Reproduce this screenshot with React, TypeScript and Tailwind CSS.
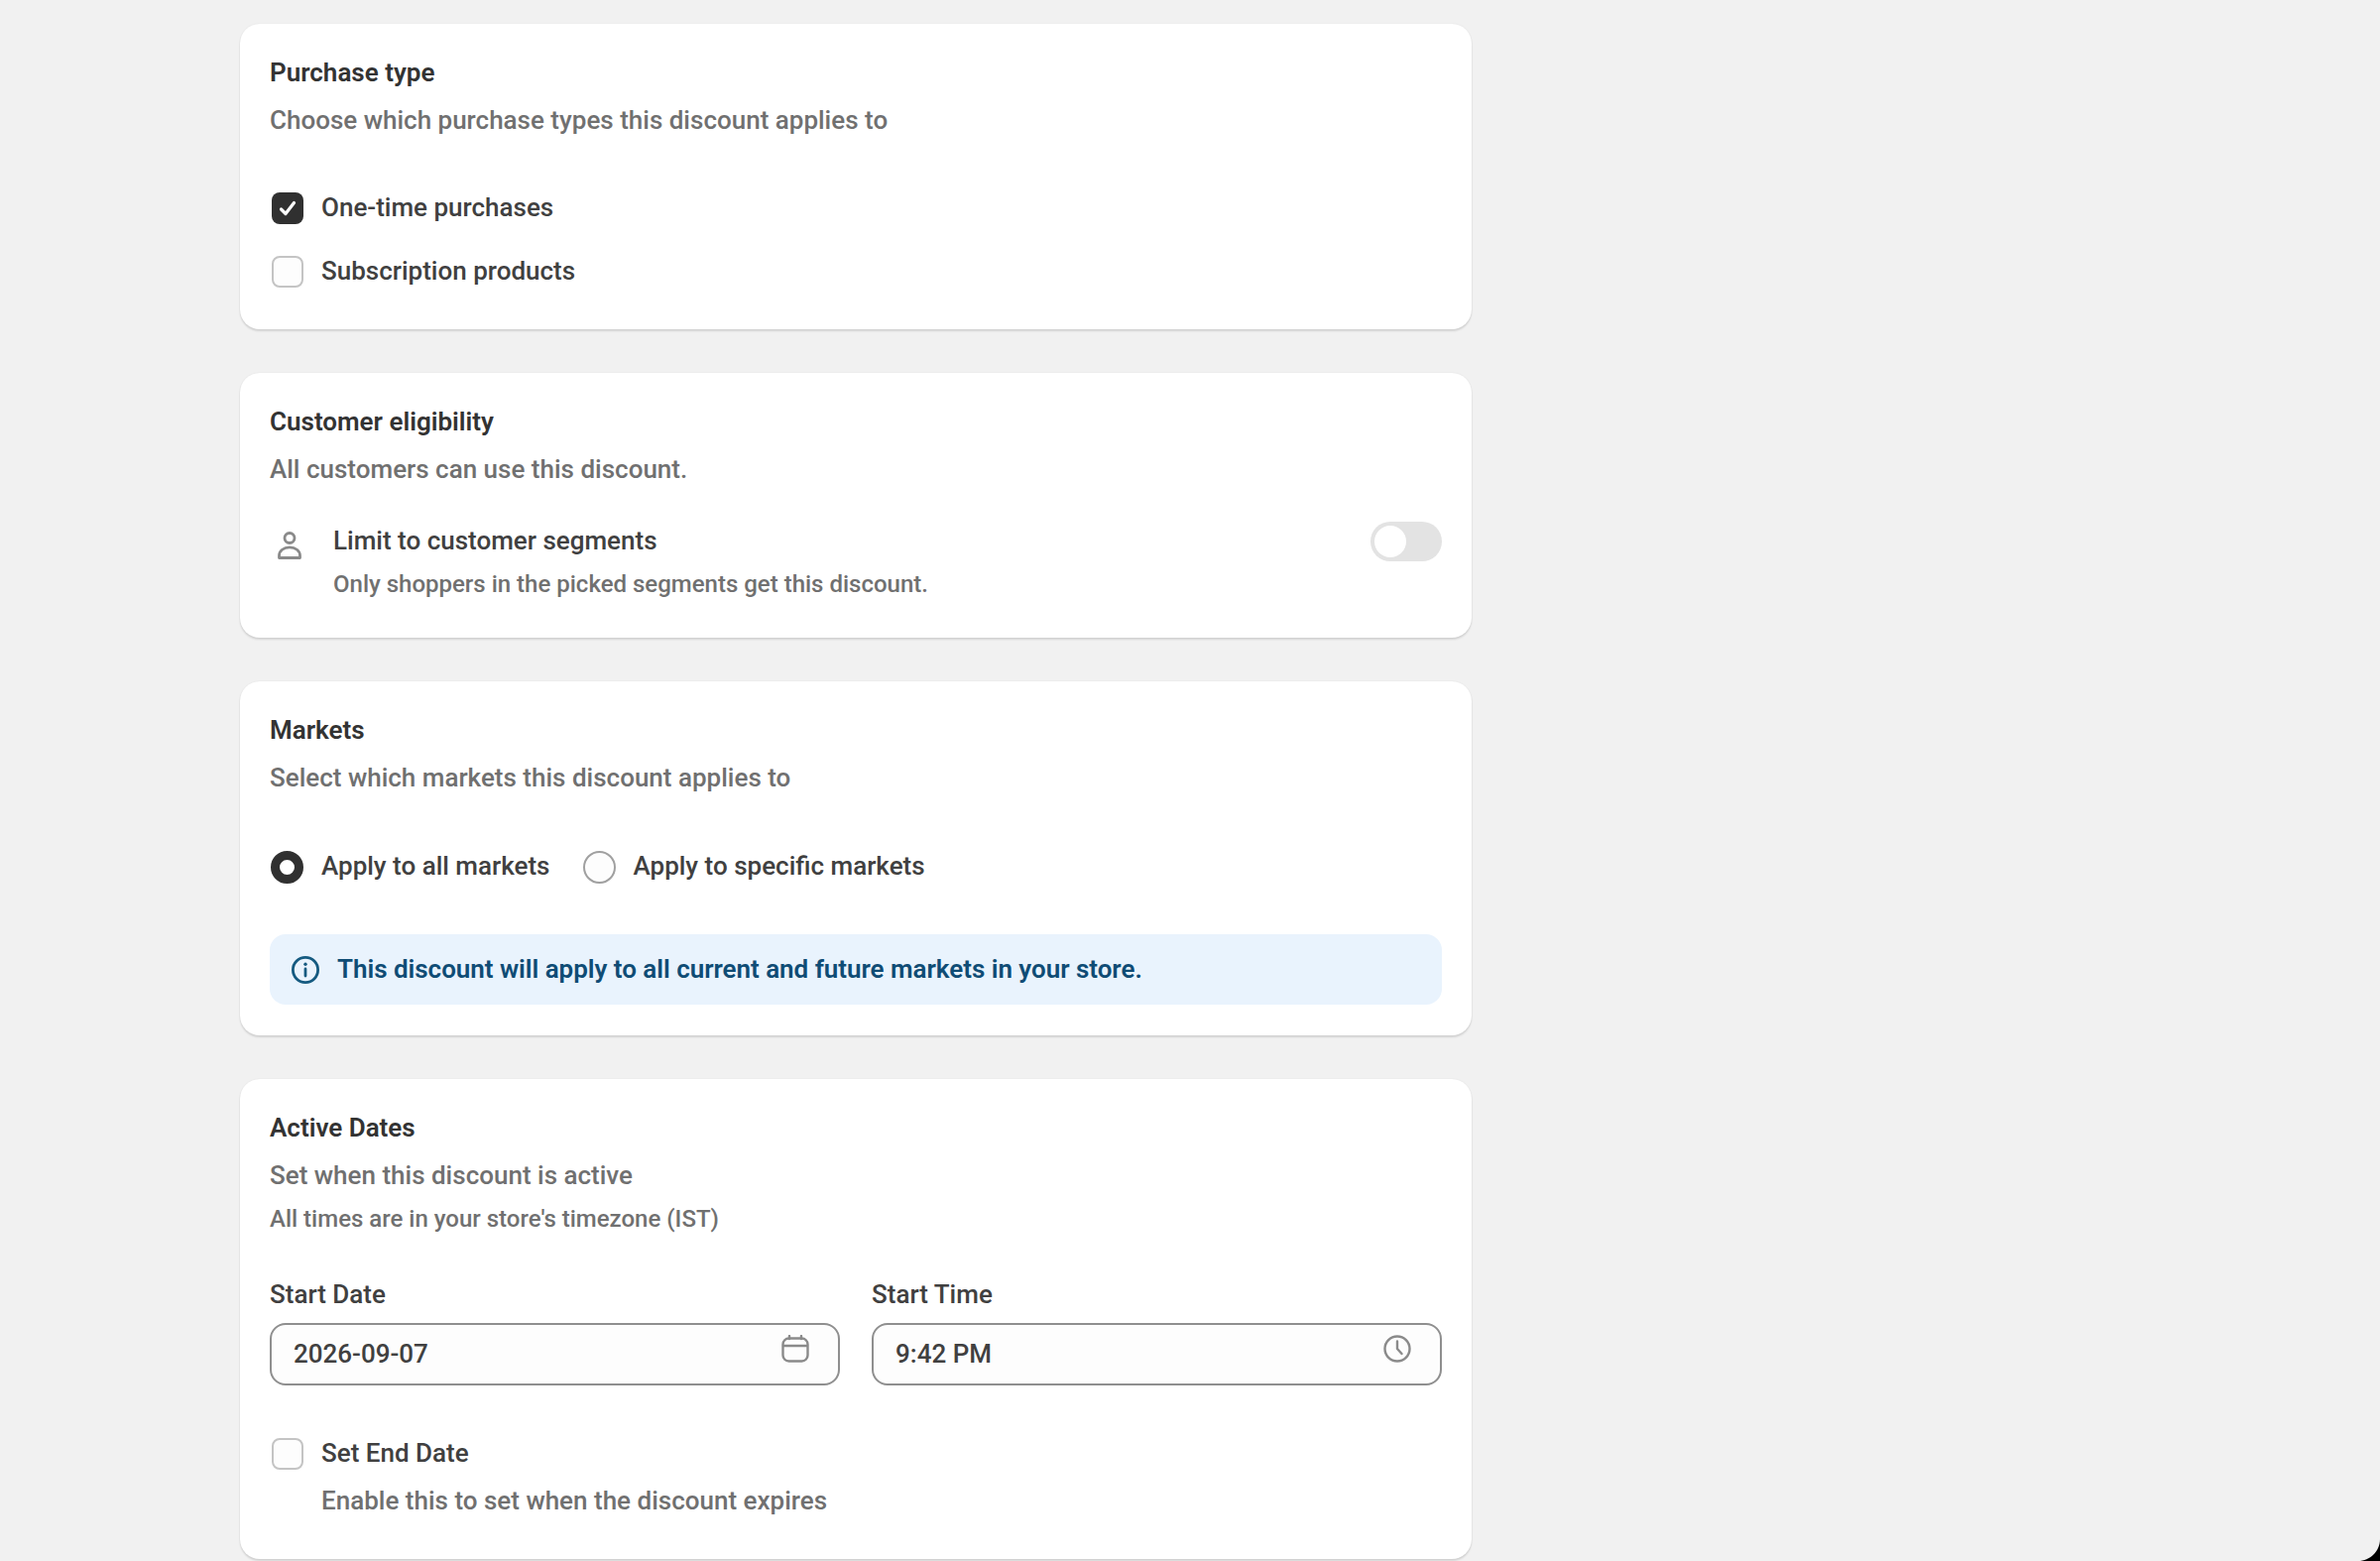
import type { ReactNode } from "react";

function Card({ title, className, children }: { title: string; className: string; children: ReactNode }) {
  return (
    <section className={`rounded-[20px] bg-white px-[30px] pt-[30px] shadow-[0_2px_2px_rgba(0,0,0,0.12),0_0_2px_rgba(0,0,0,0.07)] ${className}`}>
      <h2 className="h-[40px] text-[26px] leading-[39px] font-semibold text-[#333333]">{title}</h2>
      {children}
    </section>
  );
}

function Subtitle({ children }: { children: ReactNode }) {
  return <p className="mt-[10px] h-[36px] text-[26px] leading-[35px] font-medium text-[#707070]">{children}</p>;
}

function Checkbox({ checked = false }: { checked?: boolean }) {
  if (checked) {
    return (
      <span className="flex size-[32px] shrink-0 items-center justify-center rounded-[8px] bg-[#303030]">
        <svg className="size-[22px]" viewBox="0 0 22 22" fill="none" stroke="white" strokeWidth="3.2" strokeLinecap="round" strokeLinejoin="round">
          <path d="M4.500 12l4.500 4.500L17.500 5.500" />
        </svg>
      </span>
    );
  }
  return <span className="size-[32px] shrink-0 rounded-[8px] border-2 border-[#c4c4c4] bg-[#fdfdfd]" />;
}

function Radio({ checked = false }: { checked?: boolean }) {
  return checked ? (
    <span className="size-[33px] shrink-0 rounded-full border-[9px] border-[#303030] bg-white" />
  ) : (
    <span className="size-[33px] shrink-0 rounded-full border-2 border-[#a0a0a0] bg-[#fdfdfd]" />
  );
}

function DateField({ value, icon }: { value: string; icon: ReactNode }) {
  return (
    <div className="flex h-[63px] items-start justify-between rounded-[16px] border-2 border-[#8f8f8f] bg-[#fdfdfd] pr-[29px] pl-[22px]">
      <span className="text-[26px] leading-[59px] font-medium text-[#404040]">{value}</span>
      <span className="mt-[10px]">{icon}</span>
    </div>
  );
}

export default function App() {
  return (
    <div className="relative h-[1574px] overflow-hidden bg-[#f1f1f1] font-['Roboto',sans-serif]">
      <main className="ml-[242px] flex w-[1242px] flex-col gap-[44px] pt-[24px]">
        <Card title="Purchase type" className="h-[308px]">
          <Subtitle>Choose which purchase types this discount applies to</Subtitle>
          <div className="mt-[54px] flex flex-col gap-[32px]">
            <label className="flex h-[32px] items-center gap-[18px] pl-[2px] text-[26px] font-medium text-[#404040]">
              <Checkbox checked />
              <span className="mb-[2px]">One-time purchases</span>
            </label>
            <label className="flex h-[32px] items-center gap-[18px] pl-[2px] text-[26px] font-medium text-[#404040]">
              <Checkbox />
              <span className="mb-[2px]">Subscription products</span>
            </label>
          </div>
        </Card>

        <Card title="Customer eligibility" className="h-[267px]">
          <Subtitle>All customers can use this discount.</Subtitle>
          <div className="mt-[35px] flex items-start justify-between">
            <div className="flex">
              <svg className="mt-[9px] ml-[7px] h-[28px] w-[26px] text-[#8a8a8a]" viewBox="0 0 26 28" fill="none" stroke="currentColor" strokeWidth="2.8">
                <circle cx="13" cy="6.500" r="5" />
                <path d="M2.500 26.500v-2.200C2.500 19.500 7 15.800 13 15.800s10.500 3.700 10.500 8.500v2.200z" strokeLinejoin="round" />
              </svg>
              <div className="ml-[31px]">
                <div className="text-[26px] leading-[36px] font-medium text-[#404040]">Limit to customer segments</div>
                <div className="mt-[8px] text-[24px] leading-[36px] font-medium text-[#707070]">
                  Only shoppers in the picked segments get this discount.
                </div>
              </div>
            </div>
            <span className="-mt-[1px] flex h-[40px] w-[72px] items-center rounded-full bg-[#e3e3e3] pl-[4px]">
              <span className="size-[32px] rounded-full bg-white" />
            </span>
          </div>
        </Card>

        <Card title="Markets" className="h-[357px]">
          <Subtitle>Select which markets this discount applies to</Subtitle>
          <div className="mt-[55px] flex h-[33px] items-center pl-[1px] text-[26px] font-medium text-[#404040]">
            <label className="flex items-center gap-[18px]">
              <Radio checked />
              <span className="mb-[2px]">Apply to all markets</span>
            </label>
            <label className="ml-[33px] flex items-center gap-[18px]">
              <Radio />
              <span className="mb-[2px]">Apply to specific markets</span>
            </label>
          </div>
          <div className="mt-[51px] flex h-[71px] items-center rounded-[16px] bg-[#e9f3fd] pl-[21px]">
            <svg className="size-[30px]" viewBox="0 0 30 30" fill="none" stroke="#155a80" strokeWidth="2.8" strokeLinecap="round">
              <circle cx="15" cy="15" r="12.600" />
              <path d="M15 14v7" />
              <path d="M15 9.200v.1" strokeWidth="3.400" />
            </svg>
            <span className="ml-[17px] text-[26px] tracking-[-0.03px] font-semibold text-[#0f4c75]">
              This discount will apply to all current and future markets in your store.
            </span>
          </div>
        </Card>

        <Card title="Active Dates" className="h-[484px]">
          <Subtitle>Set when this discount is active</Subtitle>
          <p className="mt-[7px] text-[24px] leading-[36px] font-medium text-[#707070]">
            All times are in your store&apos;s timezone (IST)
          </p>
          <div className="mt-[40px] grid grid-cols-2 gap-[32px]">
            <div>
              <div className="mb-[11px] text-[26px] leading-[36px] font-medium text-[#404040]">Start Date</div>
              <DateField
                value="2026-09-07"
                icon={
                  <svg className="size-[28px] text-[#8a8a8a]" viewBox="0 0 28 28" fill="none" stroke="currentColor" strokeWidth="2.4" strokeLinecap="round">
                    <rect x="1.500" y="3.500" width="25" height="23" rx="6" />
                    <path d="M2 11h24M8 1v3M20 1v3" />
                  </svg>
                }
              />
            </div>
            <div>
              <div className="mb-[11px] text-[26px] leading-[36px] font-medium text-[#404040]">Start Time</div>
              <DateField
                value="9:42 PM"
                icon={
                  <svg className="size-[28px] text-[#8a8a8a]" viewBox="0 0 28 28" fill="none" stroke="currentColor" strokeWidth="2.4" strokeLinecap="round" strokeLinejoin="round">
                    <circle cx="14" cy="14" r="12.500" />
                    <path d="M14 6.500V14l4.500 5" />
                  </svg>
                }
              />
            </div>
          </div>
          <label className="mt-[53px] flex h-[32px] items-center gap-[18px] pl-[2px] text-[26px] font-medium text-[#404040]">
            <Checkbox />
            <span className="mb-[2px]">Set End Date</span>
          </label>
          <p className="mt-[13px] ml-[52px] text-[26px] leading-[36px] font-medium text-[#707070]">
            Enable this to set when the discount expires
          </p>
        </Card>
      </main>

      {/* window corner */}
      <svg className="absolute right-0 bottom-0 size-[22px]" viewBox="0 0 22 22" fill="black">
        <path d="M22 0v22H0C12 22 22 12 22 0z" />
      </svg>
    </div>
  );
}
